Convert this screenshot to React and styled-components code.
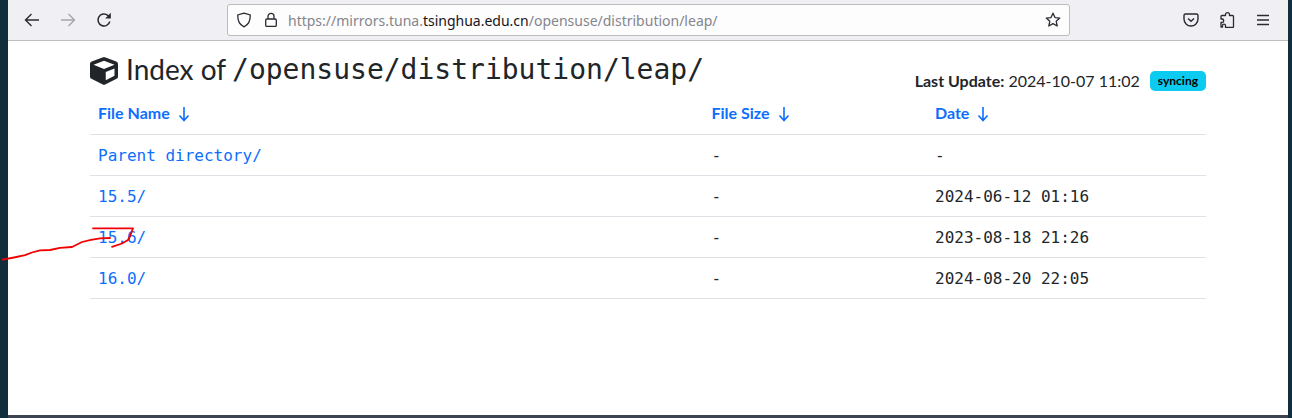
import React from 'react';
import styled, { createGlobalStyle } from 'styled-components';
import { FaCube } from 'react-icons/fa';

const monoStack = "'DejaVu Sans Mono', monospace";

const GlobalStyle = createGlobalStyle`
  html, body {
    margin: 0;
    padding: 0;
    height: 100%;
    background: #fff;
  }
  #root {
    height: 100%;
  }
`;

const Desktop = styled.div`
  width: 1292px;
  height: 418px;
  box-sizing: border-box;
  position: relative;
  display: flex;
  flex-direction: column;
  border-left: 8px solid #122e3c;
  border-right: 4px solid #122e3c;
  background: #fff;
`;

const Toolbar = styled.div`
  height: 40px;
  flex: none;
  display: flex;
  align-items: center;
  background: #f0f0f4;
  border-bottom: 1px solid #bdbdc1;
`;

const NavButton = styled.div`
  width: 36px;
  height: 36px;
  display: flex;
  align-items: center;
  justify-content: center;
  color: ${(p) => (p.$disabled ? '#a6a6a9' : '#2b2a33')};
`;

const NavGroup = styled.div`
  display: flex;
  margin-left: 6px;
`;

const UrlBar = styled.div`
  margin-left: 105px;
  width: 843px;
  height: 32px;
  box-sizing: border-box;
  display: flex;
  align-items: center;
  background: #fdfdfd;
  border: 1px solid #bcbcc0;
  border-radius: 3px;
  padding: 0 8px;
  font: 14px 'Noto Sans', sans-serif;
`;

const UrlIcon = styled.span`
  display: flex;
  color: #2b2a33;
  margin-right: ${(p) => p.$gap}px;
`;

const UrlText = styled.div`
  flex: 1;
  color: #85858c;
  white-space: nowrap;
`;

const Host = styled.span`
  color: #15141a;
`;

const RightTools = styled.div`
  display: flex;
  margin-left: 103px;
`;

const Page = styled.div`
  flex: 1;
  padding: 0 82px;
  color: #212529;
  font-family: Lato, sans-serif;
`;

const HeaderRow = styled.div`
  display: flex;
  justify-content: space-between;
  align-items: flex-start;
  height: 52px;
  padding-top: 10px;
  margin-bottom: -10px;
`;

const Title = styled.h1`
  margin: 0;
  display: flex;
  align-items: center;
  height: 36px;
  font: 400 28px/36px Lato, sans-serif;
  color: #212529;
  white-space: nowrap;
`;

const CubeIcon = styled(FaCube)`
  width: 28px;
  height: 28px;
  margin-right: 8px;
  margin-top: 4px;
  color: #212529;
`;

const Mono = styled.code`
  font: 400 28px ${monoStack};
  margin-left: 6px;
`;

const Status = styled.div`
  display: flex;
  align-items: center;
  margin-top: 20px;
  font-size: 16px;
  line-height: 20px;
  white-space: nowrap;
`;

const Badge = styled.span`
  margin-left: 10px;
  height: 20px;
  padding: 0 8px;
  display: inline-flex;
  align-items: center;
  background: #0dcaf0;
  border-radius: 5px;
  color: #000;
  font-weight: 700;
  font-size: 12px;
`;

const Table = styled.table`
  width: 1116px;
  border-collapse: collapse;
  table-layout: fixed;
`;

const HeadCell = styled.th`
  height: 41px;
  box-sizing: border-box;
  padding: 0 8px 2px 8px;
  text-align: left;
  font: 700 16px Lato, sans-serif;
  color: #0d6efd;
  border-bottom: 1px solid #dee2e6;
  white-space: nowrap;
`;

const SortArrow = styled.svg`
  width: 14px;
  height: 16px;
  margin-left: 7px;
  vertical-align: -3px;
`;

const Cell = styled.td`
  height: 41px;
  box-sizing: border-box;
  padding: 2px 8px 0;
  font: 400 16px ${monoStack};
  color: ${(p) => (p.$link ? '#0d6efd' : '#212529')};
  border-bottom: 1px solid #dee2e6;
  white-space: nowrap;
`;

const BottomEdge = styled.div`
  height: 3px;
  flex: none;
  background: #3b4450;
`;

const Scribble = styled.svg`
  position: absolute;
  left: -8px;
  top: 0;
  pointer-events: none;
`;

const rows = [
  { name: 'Parent directory/', size: '-', date: '-' },
  { name: '15.5/', size: '-', date: '2024-06-12 01:16' },
  { name: '15.6/', size: '-', date: '2023-08-18 21:26' },
  { name: '16.0/', size: '-', date: '2024-08-20 22:05' },
];

const Arrow = () => (
  <SortArrow viewBox="0 0 14 16" fill="none" stroke="currentColor" strokeWidth="1.6">
    <path d="M7 1v13M2.5 9.5 7 14.5l4.5-5" />
  </SortArrow>
);

function App() {
  return (
    <>
      <GlobalStyle />
      <Desktop>
        <Toolbar>
          <NavGroup>
            <NavButton>
              <svg width="16" height="16" viewBox="0 0 16 16" fill="none" stroke="currentColor" strokeWidth="1.4">
                <path d="M15 8H1.500M7.500 2 1.500 8l6 6" />
              </svg>
            </NavButton>
            <NavButton $disabled>
              <svg width="16" height="16" viewBox="0 0 16 16" fill="none" stroke="currentColor" strokeWidth="1.4">
                <path d="M1 8h13.500M8.500 2l6 6-6 6" />
              </svg>
            </NavButton>
            <NavButton>
              <svg width="16" height="16" viewBox="0 0 16 16" fill="none" stroke="currentColor" strokeWidth="1.5">
                <path d="M13.800 9.500A6 6 0 1 1 11.800 3.300L14.200 5.600" />
                <path d="M14.800 .8v5.600H9.200l5.600-5.600z" fill="currentColor" stroke="none" />
              </svg>
            </NavButton>
          </NavGroup>
          <UrlBar>
            <UrlIcon $gap={11}>
              <svg width="16" height="16" viewBox="0 0 16 16" fill="none" stroke="currentColor" strokeWidth="1.3">
                <path d="M8 1.200 14.200 3c.3 5.600-1.700 9.700-6.200 11.800C3.500 12.700 1.500 8.600 1.800 3z" />
              </svg>
            </UrlIcon>
            <UrlIcon $gap={9}>
              <svg width="16" height="16" viewBox="0 0 16 16" fill="none" stroke="currentColor" strokeWidth="1.3">
                <rect x="2.700" y="7" width="10.600" height="7.400" rx="1.200" />
                <path d="M5 7V4.300a3 3 0 0 1 6 0V7" />
              </svg>
            </UrlIcon>
            <UrlText>
              https://mirrors.tuna.<Host>tsinghua.edu.cn</Host>/opensuse/distribution/leap/
            </UrlText>
            <UrlIcon $gap={0}>
              <svg width="16" height="16" viewBox="0 0 16 16" fill="none" stroke="currentColor" strokeWidth="1.3" strokeLinejoin="round">
                <path d="m8 1.200 2 4.400 4.800.5-3.600 3.200 1 4.700L8 11.600l-4.200 2.400 1-4.700L1.200 6.100 6 5.600z" />
              </svg>
            </UrlIcon>
          </UrlBar>
          <RightTools>
            <NavButton>
              <svg width="16" height="16" viewBox="0 0 16 16" fill="none" stroke="currentColor" strokeWidth="1.4">
                <path d="M2.500 2h11A1.500 1.500 0 0 1 15 3.500V7A7 7 0 0 1 1 7V3.500A1.500 1.500 0 0 1 2.500 2z" />
                <path d="M5 6.500 8 9.300l3-2.800" />
              </svg>
            </NavButton>
            <NavButton>
              <svg width="16" height="16" viewBox="0 0 16 16" fill="none" stroke="currentColor" strokeWidth="1.3" strokeLinejoin="round">
                <path d="M6.500 3.500V2.700a2 2 0 0 1 4 0v.8h3a1 1 0 0 1 1 1v10.300a.7.700 0 0 1-.7.700H6.500v-1.800a1.500 1.500 0 0 0-3 0V15H2V10.500h1a1.700 1.700 0 0 0 0-3.500H2V4.500a1 1 0 0 1 1-1z" />
              </svg>
            </NavButton>
            <NavButton>
              <svg width="16" height="16" viewBox="0 0 16 16" fill="none" stroke="currentColor" strokeWidth="1.4">
                <path d="M2 3.500h12M2 8h12M2 12.500h12" />
              </svg>
            </NavButton>
          </RightTools>
        </Toolbar>
        <Page>
          <HeaderRow>
            <Title>
              <CubeIcon />
              Index of
              <Mono>/opensuse/distribution/leap/</Mono>
            </Title>
            <Status>
              <strong>Last Update:</strong>&nbsp;2024-10-07 11:02
              <Badge>syncing</Badge>
            </Status>
          </HeaderRow>
          <Table>
            <colgroup>
              <col style={{ width: 613.5 }} />
              <col style={{ width: 223.5 }} />
              <col />
            </colgroup>
            <thead>
              <tr>
                <HeadCell>File Name<Arrow /></HeadCell>
                <HeadCell>File Size<Arrow /></HeadCell>
                <HeadCell>Date<Arrow /></HeadCell>
              </tr>
            </thead>
            <tbody>
              {rows.map((row) => (
                <tr key={row.name}>
                  <Cell $link>{row.name}</Cell>
                  <Cell>{row.size}</Cell>
                  <Cell>{row.date}</Cell>
                </tr>
              ))}
            </tbody>
          </Table>
        </Page>
        <BottomEdge />
        <Scribble width="150" height="280" viewBox="0 0 150 280" fill="none" stroke="#f20000" strokeWidth="1.800" strokeLinecap="round" strokeLinejoin="round">
          <path d="M2.500 259.700 14 257.500 25 255.200 32 252.500 40 250.400 50 250 60 247.800 72 247 82 242 91 239.800 100 238.300 110 238" />
          <path d="M93 228.300H133L130.500 235 128 240 122 243.500 112 246.800" />
        </Scribble>
      </Desktop>
    </>
  );
}

export default App;
